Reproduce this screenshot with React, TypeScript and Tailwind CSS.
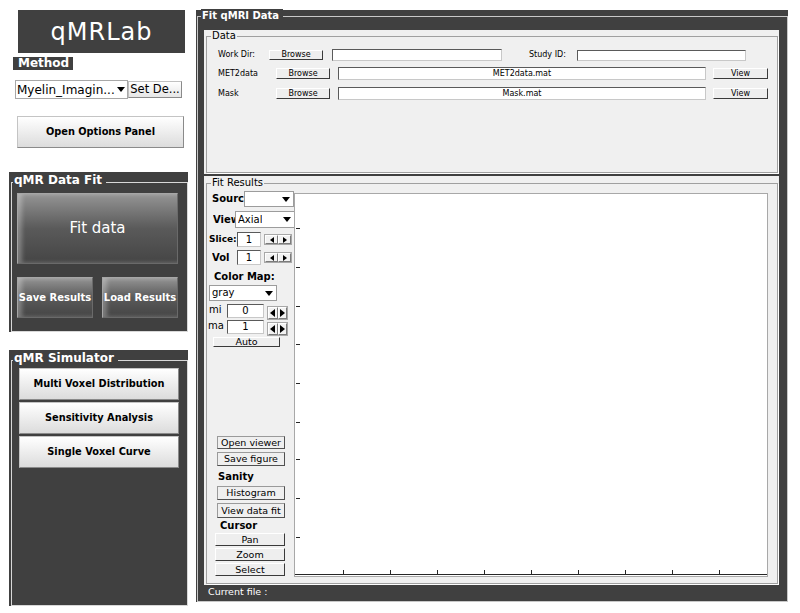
import React from "react";

function DownArrow() {
  return (
    <svg width="8" height="5" viewBox="0 0 8 5" className="shrink-0">
      <polygon points="0,0 8,0 4,5" fill="#000" />
    </svg>
  );
}

function Select({ className, text, textClass }: { className: string; text: string; textClass: string }) {
  return (
    <div className={`shrink-0 flex items-center justify-between bg-white border border-[#9c9c9c] pl-[2px] pr-[3px] ${className}`}>
      <span className={`whitespace-nowrap overflow-hidden leading-none ${textClass}`}>{text}</span>
      <DownArrow />
    </div>
  );
}

function Spinner({ className, big }: { className: string; big?: boolean }) {
  const cell =
    "flex-1 flex items-center justify-center bg-[#f2f2f2] border border-t-white border-l-white border-r-[#7c7c7c] border-b-[#7c7c7c]";
  return (
    <div className={`shrink-0 flex border border-[#a8a8a8] ${className}`}>
      <div className={cell}>
        {big ? (
          <svg width="5" height="8" viewBox="0 0 5 8"><polygon points="5,0 0,4 5,8" fill="#000" /></svg>
        ) : (
          <svg width="4" height="6" viewBox="0 0 4 6"><polygon points="4,0 0,3 4,6" fill="#000" /></svg>
        )}
      </div>
      <div className={cell}>
        {big ? (
          <svg width="5" height="8" viewBox="0 0 5 8"><polygon points="0,0 5,4 0,8" fill="#000" /></svg>
        ) : (
          <svg width="4" height="6" viewBox="0 0 4 6"><polygon points="0,0 4,3 0,6" fill="#000" /></svg>
        )}
      </div>
    </div>
  );
}

function Field({ className, children }: { className: string; children?: React.ReactNode }) {
  return (
    <div
      className={`shrink-0 flex items-center justify-center bg-white border border-t-[#5a5a5a] border-l-[#5a5a5a] border-r-[#c8c8c8] border-b-[#c8c8c8] leading-none whitespace-nowrap overflow-hidden ${className}`}
    >
      {children}
    </div>
  );
}

function SmallBtn({ className, children }: { className: string; children: React.ReactNode }) {
  return (
    <div
      className={`shrink-0 flex items-center justify-center bg-[#eeeeee] border border-t-white border-l-white border-r-[#3a3a3a] border-b-[#3a3a3a] leading-none whitespace-nowrap ${className}`}
    >
      {children}
    </div>
  );
}

function GrayBtn({ className, children }: { className: string; children: React.ReactNode }) {
  return (
    <div
      className={`shrink-0 flex items-center justify-center bg-[#efefef] border border-[#9a9a9a] border-r-[#505050] border-b-[#505050] text-[9.5px] leading-none whitespace-nowrap ${className}`}
    >
      {children}
    </div>
  );
}

function LightBigBtn({ className, children }: { className: string; children: React.ReactNode }) {
  return (
    <div
      className={`shrink-0 flex items-center justify-center bg-gradient-to-b from-white to-[#dcdcdc] border border-[#c4c4c4] border-r-[#8a8a8a] border-b-[#8a8a8a] font-bold text-[9.8px] leading-none whitespace-nowrap ${className}`}
    >
      {children}
    </div>
  );
}

function DarkBtn({ className, children }: { className: string; children: React.ReactNode }) {
  return (
    <div
      className={`shrink-0 flex items-center justify-center bg-gradient-to-b from-[#959595] via-[#5a5a5a] to-[#454545] border border-[#a6a6a6] border-r-[#6a6a6a] border-b-[#6a6a6a] shadow-[inset_4px_0_4px_rgba(255,255,255,0.28)] text-white leading-none whitespace-nowrap ${className}`}
    >
      {children}
    </div>
  );
}

export default function App() {
  const leftTicks = [34, 73, 112, 150, 189, 228, 265, 304, 343];
  const bottomTicks = [48, 95, 142, 189, 236, 283, 330, 377, 424];

  return (
    <div className="w-[800px] h-[613px] bg-white flex overflow-hidden font-['DejaVu_Sans',sans-serif] text-black">
      {/* LEFT COLUMN */}
      <div className="w-[196px] shrink-0 flex flex-col">
        <div className="ml-[18px] mt-[10px] w-[167px] h-[43px] bg-[#404040] flex items-center justify-center text-white text-[24px] tracking-[1px] leading-none">
          qMRLab
        </div>
        <div className="ml-[13px] mt-[4px] w-[60px] h-[13px] bg-[#404040] text-white font-bold text-[12px] leading-[13px] pl-[5px]">
          Method
        </div>
        <div className="ml-[15px] mt-[10px] flex items-start">
          <div className="shrink-0 w-[113px] h-[19px] bg-white border border-[#a8a8a8] flex items-center justify-between pl-[1px] pr-[2px]">
            <span className="text-[12px] leading-none whitespace-nowrap">Myelin_Imagin...</span>
            <DownArrow />
          </div>
          <div className="shrink-0 w-[54px] h-[17px] mt-[1px] bg-gradient-to-b from-white to-[#e6e6e6] border border-[#c0c0c0] border-r-[#8a8a8a] border-b-[#8a8a8a] flex items-center justify-center text-[11.5px] leading-none whitespace-nowrap">
            Set De...
          </div>
        </div>
        <LightBigBtn className="ml-[17px] mt-[17px] w-[167px] h-[32px]">Open Options Panel</LightBigBtn>

        {/* qMR Data Fit */}
        <div className="ml-[9px] mt-[24px] w-[179px] h-[160px] bg-[#404040] pt-[10px] pl-[2px]">
          <div className="relative h-full border border-[#d8d8d8] flex flex-col">
            <span className="absolute left-[1px] -top-[10px] bg-[#404040] pl-[1px] pr-[4px] text-white font-bold text-[12px] leading-[15px]">
              qMR Data Fit
            </span>
            <DarkBtn className="ml-[5px] mt-[10px] w-[161px] h-[71px] text-[15px]">Fit data</DarkBtn>
            <div className="ml-[5px] mt-[13px] flex">
              <DarkBtn className="w-[76px] h-[41px] font-bold text-[10px]">Save Results</DarkBtn>
              <DarkBtn className="ml-[9px] w-[76px] h-[41px] font-bold text-[10px]">Load Results</DarkBtn>
            </div>
          </div>
        </div>

        {/* qMR Simulator */}
        <div className="ml-[9px] mt-[18px] w-[179px] h-[256px] bg-[#404040] pt-[10px] pl-[2px]">
          <div className="relative h-full border border-[#d8d8d8] flex flex-col">
            <span className="absolute left-[1px] -top-[10px] bg-[#404040] pl-[1px] pr-[4px] text-white font-bold text-[12px] leading-[15px]">
              qMR Simulator
            </span>
            <LightBigBtn className="ml-[7px] mt-[7px] w-[160px] h-[32px]">Multi Voxel Distribution</LightBigBtn>
            <LightBigBtn className="ml-[7px] mt-[2px] w-[160px] h-[32px]">Sensitivity Analysis</LightBigBtn>
            <LightBigBtn className="ml-[7px] mt-[2px] w-[160px] h-[32px]">Single Voxel Curve</LightBigBtn>
          </div>
        </div>
      </div>

      {/* RIGHT PANEL */}
      <div className="mt-[10px] w-[592px] h-[592px] shrink-0 bg-[#404040] pt-[6px] pl-[1px]">
        <div className="relative h-full border border-[#c8c8c8] flex flex-col">
          <span className="absolute left-[3px] -top-[8px] bg-[#404040] pl-[1px] pr-[4px] text-white font-bold text-[10px] leading-[13px]">
            Fit qMRI Data
          </span>

          {/* Data panel */}
          <div className="ml-[6px] mt-[13px] w-[575px] h-[144px] bg-[#f0f0f0] pt-[6px] pl-[2px] pr-[1px] pb-[1px]">
            <div className="relative h-full border border-[#a0a0a0] shadow-[1px_1px_0_#ffffff] flex flex-col">
              <span className="absolute left-[4px] -top-[7px] bg-[#f0f0f0] px-[1px] text-[10px] leading-[12px]">Data</span>

              <div className="mt-[12px] h-[12px] flex items-center text-[8px] leading-none">
                <span className="ml-[11px] w-[51px] shrink-0">Work Dir:</span>
                <SmallBtn className="w-[54px] h-[10px] text-[8px]">Browse</SmallBtn>
                <Field className="ml-[9px] w-[170px] h-[12px]" />
                <span className="ml-[27px] w-[48px] shrink-0">Study ID:</span>
                <Field className="w-[169px] h-[11px]" />
              </div>

              <div className="mt-[6px] h-[13px] flex items-center text-[8px] leading-none">
                <span className="ml-[11px] w-[58px] shrink-0">MET2data</span>
                <SmallBtn className="w-[54px] h-[11px] text-[8px]">Browse</SmallBtn>
                <Field className="ml-[8px] w-[368px] h-[13px] text-[8px]">MET2data.mat</Field>
                <SmallBtn className="ml-[7px] w-[55px] h-[11px] text-[8px]">View</SmallBtn>
              </div>

              <div className="mt-[7px] h-[13px] flex items-center text-[8px] leading-none">
                <span className="ml-[11px] w-[58px] shrink-0">Mask</span>
                <SmallBtn className="w-[54px] h-[11px] text-[8px]">Browse</SmallBtn>
                <Field className="ml-[8px] w-[368px] h-[13px] text-[8px]">Mask.mat</Field>
                <SmallBtn className="ml-[7px] w-[55px] h-[11px] text-[8px]">View</SmallBtn>
              </div>
            </div>
          </div>

          {/* Fit Results panel */}
          <div className="ml-[6px] mt-[2px] w-[575px] h-[409px] bg-[#f0f0f0] pt-[7px] pl-[2px] pr-[1px] pb-[1px]">
            <div className="relative h-full border border-[#a0a0a0] shadow-[1px_1px_0_#ffffff] flex">
              <span className="absolute left-[4px] -top-[7px] bg-[#f0f0f0] px-[1px] text-[10px] leading-[12px]">Fit Results</span>

              {/* controls column */}
              <div className="w-[87px] shrink-0 flex flex-col text-[10px]">
                <div className="mt-[7px] h-[16px] flex items-center">
                  <span className="ml-[5px] w-[32px] shrink-0 overflow-hidden whitespace-nowrap font-bold leading-none">Source</span>
                  <Select className="w-[50px] h-[16px]" text="" textClass="text-[10px]" />
                </div>
                <div className="mt-[4px] h-[17px] flex items-center">
                  <span className="ml-[6px] w-[22px] shrink-0 overflow-hidden whitespace-nowrap font-bold leading-none">View</span>
                  <Select className="w-[60px] h-[17px]" text="Axial" textClass="text-[10px]" />
                </div>
                <div className="mt-[4px] h-[15px] flex items-center">
                  <span className="ml-[2px] w-[28px] shrink-0 whitespace-nowrap font-bold leading-none text-[9px]">Slice:</span>
                  <Field className="w-[24px] h-[15px] text-[10px]">1</Field>
                  <Spinner className="ml-[3px] w-[28px] h-[11px]" />
                </div>
                <div className="mt-[3px] h-[15px] flex items-center">
                  <span className="ml-[5px] w-[25px] shrink-0 overflow-hidden whitespace-nowrap font-bold leading-none">Vol</span>
                  <Field className="w-[24px] h-[15px] text-[10px]">1</Field>
                  <Spinner className="ml-[3px] w-[28px] h-[11px]" />
                </div>
                <div className="mt-[6px] h-[12px] ml-[7px] font-bold leading-[12px] whitespace-nowrap">Color Map:</div>
                <Select className="mt-[2px] ml-[2px] w-[68px] h-[16px]" text="gray" textClass="text-[10px]" />
                <div className="mt-[3px] h-[14px] flex items-start">
                  <span className="ml-[2px] mt-[1px] w-[18px] shrink-0 overflow-hidden whitespace-nowrap leading-none">mi</span>
                  <Field className="w-[37px] h-[14px] text-[10px]">0</Field>
                  <Spinner className="ml-[3px] mt-[2px] w-[21px] h-[14px]" big />
                </div>
                <div className="mt-[2px] h-[14px] flex items-start">
                  <span className="ml-[1px] mt-[1px] w-[19px] shrink-0 overflow-hidden whitespace-nowrap leading-none">ma</span>
                  <Field className="w-[37px] h-[14px] text-[10px]">1</Field>
                  <Spinner className="ml-[3px] mt-[2px] w-[21px] h-[14px]" big />
                </div>
                <SmallBtn className="mt-[3px] ml-[6px] w-[67px] h-[10px] text-[9.5px] overflow-hidden">Auto</SmallBtn>

                <GrayBtn className="mt-[89px] ml-[10px] w-[68px] h-[13px]">Open viewer</GrayBtn>
                <GrayBtn className="mt-[3px] ml-[10px] w-[68px] h-[14px]">Save figure</GrayBtn>
                <div className="mt-[5px] ml-[11px] h-[11px] font-bold leading-[11px]">Sanity</div>
                <GrayBtn className="mt-[4px] ml-[10px] w-[68px] h-[14px]">Histogram</GrayBtn>
                <GrayBtn className="mt-[3px] ml-[10px] w-[68px] h-[15px]">View data fit</GrayBtn>
                <div className="mt-[2px] ml-[13px] h-[11px] font-bold leading-[11px]">Cursor</div>
                <SmallBtn className="mt-[2px] ml-[8px] w-[70px] h-[13px] text-[9.5px]">Pan</SmallBtn>
                <SmallBtn className="mt-[2px] ml-[8px] w-[70px] h-[13px] text-[9.5px]">Zoom</SmallBtn>
                <SmallBtn className="mt-[2px] ml-[8px] w-[70px] h-[13px] text-[9.5px]">Select</SmallBtn>
              </div>

              {/* plot */}
              <div className="relative z-10 mt-[9px] w-[474px] h-[384px] shrink-0 bg-white border border-[#a8a8a8]">
                <svg width="472" height="382" viewBox="0 0 472 382" className="block">
                  <line x1="0" y1="380.5" x2="472" y2="380.5" stroke="#262626" strokeWidth="1" />
                  {leftTicks.map((y) => (
                    <line key={`l${y}`} x1="1" y1={y + 0.5} x2="5" y2={y + 0.5} stroke="#262626" strokeWidth="1" />
                  ))}
                  {bottomTicks.map((x) => (
                    <line key={`b${x}`} x1={x + 0.5} y1="376" x2={x + 0.5} y2="380" stroke="#262626" strokeWidth="1" />
                  ))}
                </svg>
              </div>
            </div>
          </div>

          <div className="ml-[10px] mt-[1px] text-white text-[9.5px] leading-[12px]">Current file :</div>
        </div>
      </div>
    </div>
  );
}
